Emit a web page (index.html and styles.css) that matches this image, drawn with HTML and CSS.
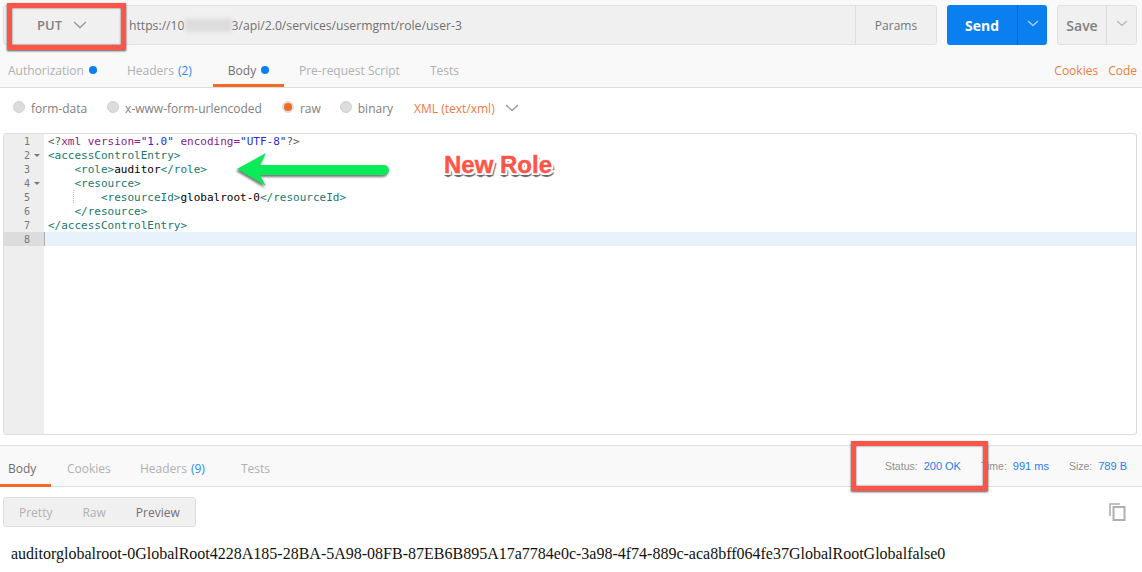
FILE: index.html
```html
<!DOCTYPE html>
<html>
<head>
<meta charset="utf-8">
<title>Postman request</title>
<link rel="stylesheet" href="styles.css">
</head>
<body>
<div class="page">
  <section class="request">
    <div class="toolbar">
      <div class="urlgroup">
        <div class="method"><span>PUT</span><svg class="chev" width="14" height="8" viewBox="0 0 14 8"><path d="M1 1l6 5.5L13 1" fill="none" stroke="#999" stroke-width="1.4"/></svg></div>
        <div class="url"><span>https://10</span><span class="blurred"></span><span>3/api/2.0/services/usermgmt/role/user-3</span></div>
        <div class="params">Params</div>
      </div>
      <div class="send"><span class="send-main">Send</span><span class="send-drop"><svg width="12" height="7" viewBox="0 0 12 7"><path d="M1 1l5 4.5L11 1" fill="none" stroke="#a9cdf2" stroke-width="1.4"/></svg></span></div>
      <div class="save"><span class="save-main">Save</span><span class="save-drop"><svg width="12" height="7" viewBox="0 0 12 7"><path d="M1 1l5 4.5L11 1" fill="none" stroke="#b5b5b5" stroke-width="1.3"/></svg></span></div>
    </div>
    <nav class="tabs">
      <div class="tab t-auth">Authorization<i class="dot"></i></div>
      <div class="tab t-head">Headers<b class="count">(2)</b></div>
      <div class="tab t-body active">Body<i class="dot"></i></div>
      <div class="tab t-pre">Pre-request Script</div>
      <div class="tab t-tests">Tests</div>
      <div class="tab-links"><span>Cookies</span><span>Code</span></div>
    </nav>
  </section>

  <div class="bodytypes">
    <label class="radio r1"><i class="circle"></i>form-data</label>
    <label class="radio r2"><i class="circle"></i>x-www-form-urlencoded</label>
    <label class="radio r3"><i class="circle on"></i>raw</label>
    <label class="radio r4"><i class="circle"></i>binary</label>
    <span class="xml">XML (text/xml)</span>
    <svg class="chev-xml" width="14" height="8" viewBox="0 0 14 8"><path d="M1 1l6 5.5L13 1" fill="none" stroke="#999" stroke-width="1.4"/></svg>
  </div>

  <div class="editor">
    <div class="gutter">
      <div class="gl">1</div>
      <div class="gl fold">2</div>
      <div class="gl">3</div>
      <div class="gl fold">4</div>
      <div class="gl">5</div>
      <div class="gl">6</div>
      <div class="gl">7</div>
      <div class="gl cur">8</div>
    </div>
    <div class="code">
      <div class="line"><span class="pi">&lt;?</span><span class="kw">xml</span> <span class="at">version=</span><span class="st">"1.0"</span> <span class="at">encoding=</span><span class="st">"UTF-8"</span><span class="pi">?&gt;</span></div>
      <div class="line tag">&lt;accessControlEntry&gt;</div>
      <div class="line tag">    &lt;role&gt;<span class="tx">auditor</span>&lt;/role&gt;</div>
      <div class="line tag">    &lt;resource&gt;</div>
      <div class="line tag guided">        &lt;resourceId&gt;<span class="tx">globalroot-0</span>&lt;/resourceId&gt;</div>
      <div class="line tag">    &lt;/resource&gt;</div>
      <div class="line tag">&lt;/accessControlEntry&gt;</div>
      <div class="line curline"><i class="caret"></i></div>
    </div>
  </div>

  <section class="response">
    <nav class="rtabs">
      <div class="rtab active">Body</div>
      <div class="rtab rt-c">Cookies</div>
      <div class="rtab rt-h">Headers<b class="count">(9)</b></div>
      <div class="rtab rt-t">Tests</div>
      <div class="stats">
        <span class="st-s">Status:<b>200 OK</b></span>
        <span class="st-t">Time:<b>991 ms</b></span>
        <span class="st-z">Size:<b>789 B</b></span>
      </div>
    </nav>
    <div class="viewbar">
      <div class="seg"><span>Pretty</span><span>Raw</span><span class="on">Preview</span></div>
      <svg class="copy" width="18" height="18" viewBox="0 0 18 18"><path d="M12 1H2v12" fill="none" stroke="#b0b0b0" stroke-width="1.6"/><rect x="5.500" y="4" width="11" height="13" fill="#fff" stroke="#b0b0b0" stroke-width="2"/></svg>
    </div>
    <p class="result">auditorglobalroot-0GlobalRoot4228A185-28BA-5A98-08FB-87EB6B895A17a7784e0c-3a98-4f74-889c-aca8bff064fe37GlobalRootGlobalfalse0</p>
  </section>

  <div class="note box-method"></div>
  <div class="note box-status"></div>
  <svg class="note arrow" width="156" height="40" viewBox="0 0 156 40"><path d="M0 18L29 2l-6 12h124a5 5 0 0 1 0 10H23l6 11z" fill="#0aeb5a"/></svg>
  <div class="note newrole">New Role</div>
</div>
</body>
</html>
```
FILE: styles.css
```css
* { box-sizing: border-box; }
html, body { margin: 0; padding: 0; background: #fff; }
body { font-family: "Open Sans", "Liberation Sans", sans-serif; font-size: 12px; color: #808080; }
.page { position: relative; width: 1142px; height: 572px; overflow: hidden; }

.request { background: #f9f9f9; height: 88px; border-bottom: 1px solid #dcdcdc; }
.toolbar { display: flex; height: 45px; padding: 5px 5px 0 3px; }
.urlgroup { display: flex; width: 934px; height: 40px; background: #f0f0f0; border: 1px solid #e0e0e0; border-radius: 3px; }
.method { width: 116px; display: flex; align-items: center; padding-left: 33px; gap: 11px; font-size: 13px; font-weight: 600; color: #808080; }
.url { flex: 1; display: flex; align-items: center; padding-left: 9px; color: #707070; font-size: 12.200px; }
.blurred { width: 47px; height: 13px; background: #dcdcdc; filter: blur(2px); }
.params { width: 81px; border-left: 1px solid #dedede; display: flex; align-items: center; justify-content: center; font-size: 12px; color: #777; }
.send { display: flex; width: 100px; height: 40px; margin-left: 10px; background: #0a7ff0; border-radius: 3px; color: #fff; font-weight: 700; font-size: 14px; }
.send-main { width: 70px; display: flex; align-items: center; justify-content: center; }
.send-drop { flex: 1; border-left: 1px solid #0a69c8; display: flex; align-items: center; justify-content: center; padding-bottom: 4px; }
.save { display: flex; width: 80px; height: 40px; margin-left: 10px; background: #f0f0f0; border: 1px solid #e0e0e0; border-radius: 3px; color: #808080; font-weight: 600; font-size: 14px; }
.save-main { width: 48px; display: flex; align-items: center; justify-content: center; }
.save-drop { flex: 1; border-left: 1px solid #dcdcdc; display: flex; align-items: center; justify-content: center; padding-bottom: 4px; }

.tabs { display: flex; height: 42px; color: #b0b0b0; font-size: 12px; }
.tab { height: 42px; display: flex; align-items: center; padding-top: 8px; }
.t-auth { margin-left: 8px; width: 119px; }
.t-head { width: 86px; }
.t-body { width: 71px; justify-content: center; color: #707070; border-bottom: 3px solid #f26b21; padding-top: 11px; }
.t-pre { margin-left: 15px; width: 131px; }
.dot { display: inline-block; width: 8px; height: 8px; margin-left: 5px; border-radius: 50%; background: #0a7ff0; }
.count { font-weight: 400; color: #2a8cf0; margin-left: 4px; }
.tab-links { margin-left: auto; padding: 8px 5px 0 0; display: flex; gap: 10px; align-items: center; color: #f4793b; }

.bodytypes { display: flex; align-items: center; height: 45px; color: #808080; font-size: 12px; position: relative; padding-bottom: 5px; }
.radio { display: flex; align-items: center; gap: 6px; }
.r1 { margin-left: 13px; }
.r2 { margin-left: 20px; }
.r3 { margin-left: 20px; }
.r4 { margin-left: 19px; }
.circle { display: block; width: 12px; height: 12px; margin-top: -3px; border-radius: 50%; background: #dcdcdc; border: 1px solid #d0d0d0; }
.circle.on { background: #f26b21; border: 2px solid #dcdcdc; }
.xml { margin-left: 21px; color: #f4793b; }
.chev-xml { margin-left: 10px; }

.editor { display: flex; height: 302px; margin: 0 5px 0 3px; border: 1px solid #dcdcdc; border-radius: 3px; overflow: hidden; font-family: "DejaVu Sans Mono", monospace; font-size: 11px; }
.gutter { width: 40px; flex: none; background: #eeeeee; color: #777; }
.gl { height: 14px; line-height: 16px; padding-left: 20px; position: relative; font-size: 10px; }
.gl.cur { background: #dcdcdc; }
.gl.fold::after { content: ""; position: absolute; left: 30px; top: 6px; border: 3px solid transparent; border-top: 3px solid #777; }
.code { flex: 1; }
.line { height: 14px; line-height: 16px; padding-left: 4px; white-space: pre; color: #000; }
.tag { color: #17786f; }
.tx { color: #000; }
.pi { color: #555; }
.kw { color: #8a1a8a; }
.at { color: #8a1a8a; }
.st { color: #2a2ad8; }
.guided { background: repeating-linear-gradient(to bottom, #bbb 0 1px, transparent 1px 2px) 29px 0 / 1px 100% no-repeat; }
.curline { background: #e8f2fc; padding-left: 0; }
.caret { display: block; width: 1px; height: 14px; margin-left: 0; background: #aaa; }

.response { margin-top: 10px; }
.rtabs { display: flex; height: 42px; background: #f9f9f9; border-top: 1px solid #e2e2e2; border-bottom: 1px solid #dcdcdc; color: #b0b0b0; position: relative; }
.rtab { display: flex; align-items: center; height: 41px; padding-top: 4px; }
.rtab.active { width: 51px; padding-left: 8px; padding-top: 7px; color: #707070; border-bottom: 3px solid #f26b21; }
.rt-c { margin-left: 16px; width: 73px; }
.rt-h { width: 101px; }
.stats { margin-left: auto; display: flex; align-items: center; font-family: "Liberation Sans", sans-serif; font-size: 10.500px; color: #909090; padding: 0 15px 0 0; }
.stats b { font-weight: 400; font-size: 11px; color: #1f80e8; margin-left: 6px; }
.st-t { margin-left: 20px; }
.st-z { margin-left: 20px; }

.viewbar { display: flex; justify-content: space-between; align-items: flex-start; padding: 10px 16px 0 3px; height: 41px; }
.seg { display: flex; width: 193px; height: 30px; background: #f0f0f0; border: 1px solid #dedede; border-radius: 3px; align-items: center; color: #b0b0b0; padding: 1px 0 0 15px; gap: 30px; }
.seg .on { color: #707070; }
.copy { margin-top: 6px; }
.result { margin: 17px 0 0 11px; font-family: "Liberation Serif", serif; font-size: 16px; line-height: 18px; color: #111; white-space: nowrap; }

.note { position: absolute; }
.box-method { left: 7px; top: 3px; width: 119px; height: 47px; border: 5px solid #ff5549; box-shadow: 0 1px 2px #555, inset 0 0 2px #555; }
.box-status { left: 851px; top: 441px; width: 137px; height: 50px; border: 5px solid #ff5549; box-shadow: 0 1px 2px #555, inset 0 0 2px #555; }
.arrow { left: 237px; top: 151px; filter: drop-shadow(-1px 2px 1px #777); }
.newrole { left: 444px; top: 150px; font-family: "Liberation Sans", sans-serif; font-weight: 700; font-size: 24px; line-height: 30px; color: #ff5549; -webkit-text-stroke: 0.4px #ff5549; text-shadow: -2px 0 #fff, 2px 0 #fff, 0 -2px #fff, 0 2px #fff, 1px 1px #fff, -1px -1px #fff, 1px -1px #fff, -1px 1px #fff, 2px 2px #fff, -2px 2px #fff, 2px -2px #fff, -2px -2px #fff, 1px 4px 1px #666, 3px 3px 1px #666, -1px 3px 1px #666; }
```
